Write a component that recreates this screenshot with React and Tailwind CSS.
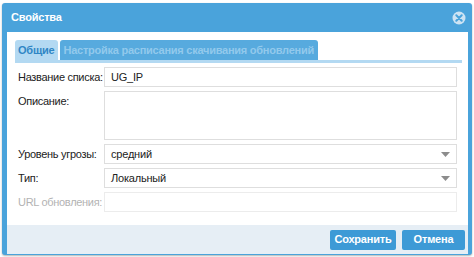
// App.jsx
import { useState } from "react";

const font = { fontFamily: '"Liberation Sans", Arial, sans-serif' };

function Arrow() {
  return (
    <svg width="9" height="5" viewBox="0 0 9 5" className="shrink-0">
      <path d="M0 0 L9 0 L4.5 5 Z" fill="#8c8c8c" />
    </svg>
  );
}

function CloseIcon() {
  return (
    <svg width="14" height="14" viewBox="0 0 14 14">
      <circle cx="7" cy="7" r="6.5" fill="#cde3f3" />
      <path d="M4.3 4.3 L9.7 9.7 M9.7 4.3 L4.3 9.7" stroke="#4aa3db" strokeWidth="2" strokeLinecap="round" />
    </svg>
  );
}

function Row({ label, children, disabled }) {
  return (
    <div className="flex items-start">
      <div className={`w-[86px] shrink-0 pt-[4px] text-[11px] leading-[13px] tracking-[-0.3px] whitespace-nowrap ${disabled ? "text-[#b3b3b3]" : "text-[#222]"}`}>
        {label}
      </div>
      {children}
    </div>
  );
}

export default function App() {
  const [name, setName] = useState("UG_IP");
  const [desc, setDesc] = useState("");

  return (
    <div className="w-[474px] h-[257px] bg-white pt-[3px] pl-[2px] overflow-hidden" style={font}>
      <div className="w-[470px] h-[252px] bg-[#4aa3db] rounded-[3px] flex flex-col pl-[5px] pr-[4px] pb-[1px] shadow-[0_1px_2px_rgba(0,0,0,0.3)]">
        {/* header */}
        <div className="h-[29px] shrink-0 flex items-center justify-between pl-[4px] pr-[2px]">
          <span className="text-white font-bold text-[11px] tracking-[-0.2px]">Свойства</span>
          <CloseIcon />
        </div>

        {/* body */}
        <div className="flex-1 min-h-0 bg-white flex flex-col">
          <div className="pt-[8px] pl-[8px] pr-[6px]">
            <div className="flex items-end gap-[2px] border-b-[3px] border-[#b3d9f2]">
              <div className="h-[20px] px-[3px] bg-[#b3d9f2] rounded-t-[3px] text-[#2f86c5] font-bold text-[11px] tracking-[-0.2px] flex items-center whitespace-nowrap">
                Общие
              </div>
              <div className="h-[20px] px-[4px] bg-[#57aade] rounded-t-[3px] text-[#92c9ec] font-bold text-[11px] tracking-[-0.25px] flex items-center whitespace-nowrap">
                Настройка расписания скачивания обновлений
              </div>
            </div>
          </div>

          <div className="pt-[4px] pl-[11px] pr-[11px] flex flex-col gap-[4px] text-[11px] tracking-[-0.2px]">
            <Row label="Название списка:">
              <input
                value={name}
                onChange={(e) => setName(e.target.value)}
                className="w-[353px] h-[20px] border border-[#dedede] px-[6px] text-[#222] outline-none"
              />
            </Row>
            <Row label="Описание:">
              <textarea
                value={desc}
                onChange={(e) => setDesc(e.target.value)}
                className="w-[353px] h-[49px] border border-[#dedede] px-[6px] resize-none outline-none block"
              />
            </Row>
            <Row label="Уровень угрозы:">
              <div className="w-[353px] h-[20px] border border-[#dedede] pl-[6px] pr-[6px] flex items-center justify-between text-[#222]">
                <span>средний</span>
                <Arrow />
              </div>
            </Row>
            <Row label="Тип:">
              <div className="w-[353px] h-[20px] border border-[#dedede] pl-[6px] pr-[6px] flex items-center justify-between text-[#222]">
                <span>Локальный</span>
                <Arrow />
              </div>
            </Row>
            <Row label="URL обновления:" disabled>
              <div className="w-[353px] h-[20px] border border-[#ececec]" />
            </Row>
          </div>

          {/* footer */}
          <div className="mt-auto h-[29px] shrink-0 bg-[#e6eef5] flex items-center justify-end gap-[6px] pr-[3px]">
            <button className="w-[66px] h-[20px] bg-[#3d9ad6] text-white font-bold text-[11px] tracking-[-0.2px] rounded-[2px]">
              Сохранить
            </button>
            <button className="w-[63px] h-[20px] bg-[#3d9ad6] text-white font-bold text-[11px] tracking-[-0.2px] rounded-[2px]">
              Отмена
            </button>
          </div>
        </div>
      </div>
    </div>
  );
}
